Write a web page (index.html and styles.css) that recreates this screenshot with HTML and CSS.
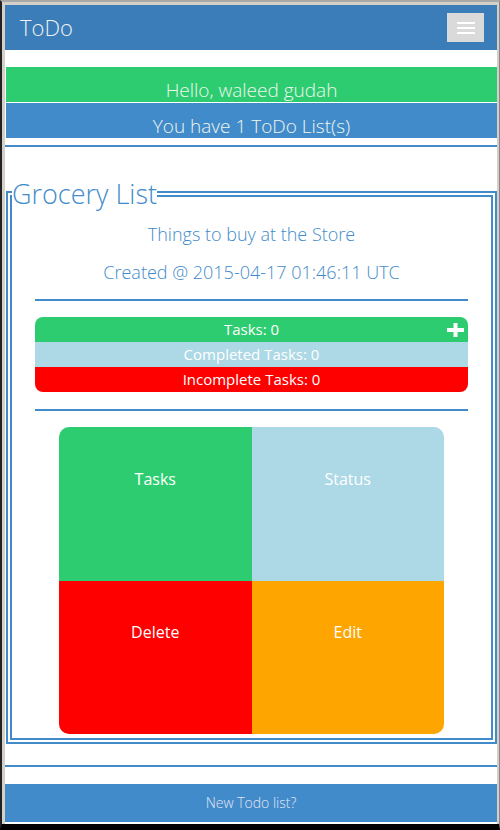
FILE: index.html
```html
<!DOCTYPE html>
<html>
<head>
<meta charset="utf-8">
<link rel="stylesheet" href="styles.css">
</head>
<body>
<div class="frame">
  <div class="screen">
    <header class="navbar">
      <span class="brand">ToDo</span>
      <button class="toggle" type="button"><span class="bar"></span><span class="bar"></span><span class="bar"></span></button>
    </header>
    <div class="banner banner-green">Hello, waleed gudah</div>
    <div class="banner banner-blue">You have 1 ToDo List(s)</div>
    <hr class="rule">
    <fieldset class="list">
      <legend class="list-title">Grocery List</legend>
      <p class="desc">Things to buy at the Store</p>
      <p class="desc">Created @ 2015-04-17 01:46:11 UTC</p>
      <hr class="inner-rule">
      <div class="stats">
        <div class="stat stat-total">Tasks: 0
          <svg class="plus" width="17" height="14" viewBox="0 0 17 14"><rect x="0" y="5" width="17" height="4" fill="#fff"/><rect x="6.5" y="0" width="4" height="14" fill="#fff"/></svg>
        </div>
        <div class="stat stat-done">Completed Tasks: 0</div>
        <div class="stat stat-todo">Incomplete Tasks: 0</div>
      </div>
      <hr class="inner-rule">
      <div class="tiles">
        <div class="tile tile-tasks">Tasks</div>
        <div class="tile tile-status">Status</div>
        <div class="tile tile-delete">Delete</div>
        <div class="tile tile-edit">Edit</div>
      </div>
    </fieldset>
    <hr class="rule rule-bottom">
    <div class="footer">New Todo list?</div>
  </div>
</div>
</body>
</html>
```

FILE: styles.css
```css
html, body {
  margin: 0;
  padding: 0;
  background: #000;
}
body {
  width: 500px;
  height: 830px;
  font-family: "Open Sans", "Noto Sans", sans-serif;
}
.frame {
  box-sizing: border-box;
  width: 500px;
  height: 830px;
  background: #d4d0c8;
  border-top: 2px solid #a9a9a9;
  border-left: 2px solid #222;
  border-right: 1px solid #888;
  border-bottom: 6px solid #000;
  padding: 3px 2px 0 3px;
}
.screen {
  height: 819px;
  background: #fff;
  overflow: hidden;
  display: flex;
  flex-direction: column;
}
.navbar {
  height: 45px;
  flex: none;
  background: #3a7db9;
  display: flex;
  align-items: center;
  justify-content: space-between;
  padding: 0 13px 0 15px;
}
.brand {
  color: #f2f2f2;
  font-size: 22px;
  font-weight: 300;
  margin-top: -1px;
}
.toggle {
  width: 37px;
  height: 29px;
  background: #dadada;
  border: 0;
  padding: 0;
  display: flex;
  flex-direction: column;
  align-items: center;
  justify-content: center;
  gap: 3px;
}
.bar {
  display: block;
  width: 18px;
  height: 2px;
  background: #fff;
}
.banner {
  height: 35px;
  box-sizing: border-box;
  flex: none;
  margin-left: 1px;
  color: #eef6ee;
  font-size: 19px;
  font-weight: 300;
  text-align: center;
  line-height: 24px;
  padding-top: 11px;
  white-space: nowrap;
  overflow: hidden;
}
.banner-green {
  margin-top: 17px;
  background: #2ecc71;
}
.banner-blue {
  margin-top: 1px;
  background: #428bca;
}
.rule {
  flex: none;
  margin: 7px 0 0 0;
  border: 0;
  border-top: 2px solid #428bca;
  height: 0;
}
.list {
  flex: none;
  margin: 28px 0 0 1px;
  padding: 0 0 4px 0;
  border: 6px double #428bca;
  min-width: 0;
}
.list-title {
  padding: 0;
  margin: 0;
  color: #428bca;
  font-size: 27px;
  font-weight: 300;
  line-height: 38px;
}
.desc {
  margin: 2px 0 0 0;
  color: #428bca;
  font-size: 18px;
  font-weight: 300;
  text-align: center;
  line-height: 38px;
}
.desc + .desc {
  margin-top: 0;
}
.inner-rule {
  margin: 8px 23px 0 23px;
  border: 0;
  border-top: 2px solid #428bca;
  height: 0;
}
.stats {
  margin: 16px 23px 0 23px;
  border-radius: 8px;
  overflow: hidden;
}
.stat {
  position: relative;
  height: 25px;
  line-height: 25px;
  text-align: center;
  color: #fff;
  font-size: 15px;
}
.stat-total { background: #2ecc71; }
.stat-done { background: #add8e6; }
.stat-todo { background: #ff0000; }
.plus {
  position: absolute;
  right: 4px;
  top: 6px;
}
.stats + .inner-rule {
  margin-top: 17px;
}
.tiles {
  margin: 16px 47px 0 47px;
  display: grid;
  grid-template-columns: 1fr 1fr;
  grid-template-rows: 154px 153px;
  border-radius: 10px;
  overflow: hidden;
}
.tile {
  color: #fff;
  font-size: 16px;
  text-align: center;
  padding-top: 40px;
  line-height: 24px;
}
.tile-tasks { background: #2ecc71; }
.tile-status { background: #add8e6; }
.tile-delete { background: #ff0000; padding-top: 39px; }
.tile-edit { background: #ffa500; padding-top: 39px; }
.rule-bottom {
  margin-top: 21px;
}
.footer {
  flex: none;
  margin-top: 17px;
  height: 38px;
  background: #428bca;
  color: #e4e4f4;
  font-size: 14px;
  font-weight: 300;
  text-align: center;
  line-height: 38px;
}
```
